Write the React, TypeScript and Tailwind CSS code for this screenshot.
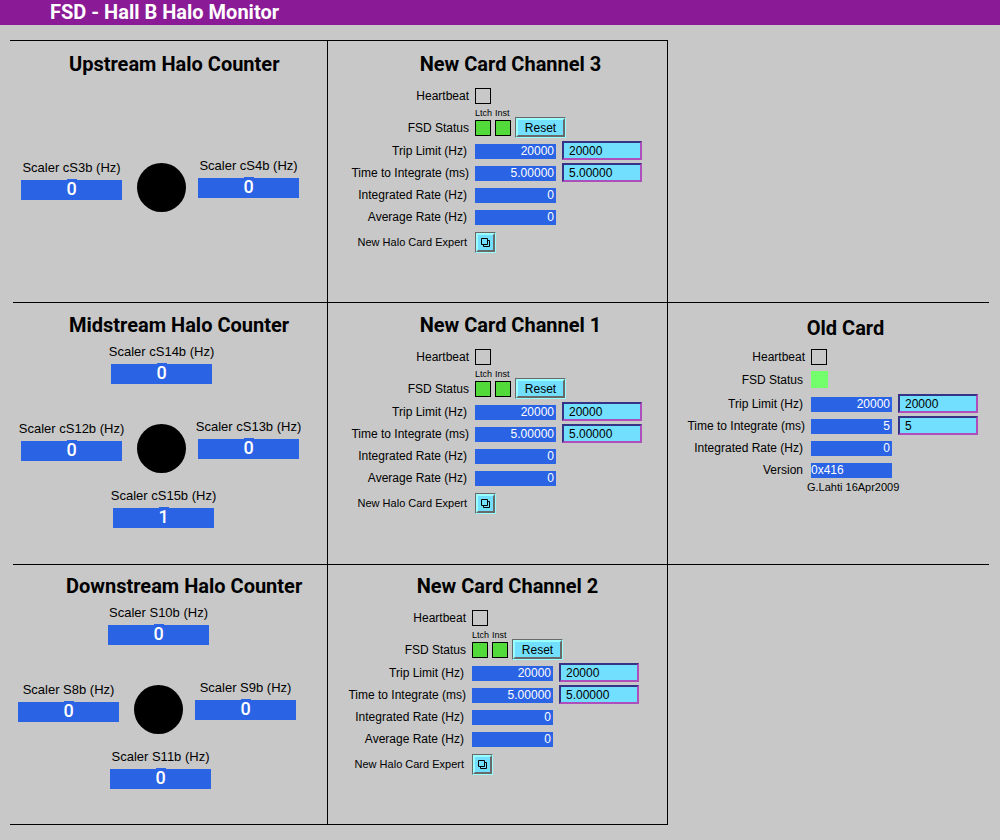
import { useId } from "react";

const BEVEL_OUTER =
  "border border-t-[#696969] border-l-[#696969] border-r-[#99ffff] border-b-[#99ffff]";
const BEVEL_INNER =
  "border-2 border-t-[#99ffff] border-l-[#99ffff] border-r-[#696969] border-b-[#696969] bg-[#73dfff]";

type ScalerData = { label: string; value: string };

function Scaler({ label, value }: ScalerData) {
  const id = useId();
  return (
    <div className="flex w-[101px] shrink-0 flex-col gap-1.5">
      <label
        htmlFor={id}
        className="flex justify-center text-[13px] leading-[13px] whitespace-nowrap"
      >
        {label}
      </label>
      <output id={id} className="flex h-5 justify-center bg-[#2a63e4]">
        <span className="-mt-px flex h-[21px] w-2.5 justify-center bg-[#2a63e4] font-[Roboto] text-lg leading-5 font-medium text-white">
          {value}
        </span>
      </output>
    </div>
  );
}

type CounterProps = {
  title: string;
  top?: ScalerData;
  left: ScalerData;
  right: ScalerData;
  bottom?: ScalerData;
  className: string;
};

function HaloCounter({ title, top, left, right, bottom, className }: CounterProps) {
  return (
    <section className={className}>
      <h2 className="pl-12 font-[Roboto] text-xl leading-6 font-bold whitespace-nowrap">{title}</h2>
      <div className="mt-2 min-h-[39px] pl-[90px]">{top && <Scaler {...top} />}</div>
      <div className="mt-9 flex items-start">
        <div className="pt-0.5">
          <Scaler {...left} />
        </div>
        <div className="mt-1 mr-3 ml-[15px] size-[49px] shrink-0 rounded-full bg-black" />
        <Scaler {...right} />
      </div>
      <div className="mt-4 pl-[92px]">{bottom && <Scaler {...bottom} />}</div>
    </section>
  );
}

type ReadingProps = {
  label: string;
  value: string;
  setpoint?: string;
  labelWidth: string;
  align?: string;
};

function Reading({ label, value, setpoint, labelWidth, align = "text-right pr-0.5" }: ReadingProps) {
  const id = useId();
  return (
    <div className="flex h-[19px] items-end gap-1.5 text-xs leading-[15px]">
      <label htmlFor={id} className={`${labelWidth} mb-px shrink-0 text-right whitespace-nowrap`}>
        {label}
      </label>
      <output id={id} className={`${align} mb-px h-[15px] w-[81px] shrink-0 bg-[#2a63e4] text-white`}>
        {value}
      </output>
      {setpoint && (
        <input
          type="text"
          aria-label={`${label} setpoint`}
          defaultValue={setpoint}
          className="h-[19px] w-20 shrink-0 border-2 border-t-[#343386] border-r-[#ae4ebc] border-b-[#ae4ebc] border-l-[#343386] bg-[#73dfff] px-[5px] outline-none"
        />
      )}
    </div>
  );
}

function Lamp({ color = "" }: { color?: string }) {
  return <span className={`${color} size-4 shrink-0 border border-black`} />;
}

function RelatedDisplayIcon() {
  return (
    <svg width="9" height="9" viewBox="0 0 9 9" fill="none" stroke="black">
      <path d="M0.5 0.5H6.5V6.5H0.5Z" />
      <path d="M6.5 2.5H8.5V8.5H2.5V6.5" />
    </svg>
  );
}

type ChannelProps = { channel: number; className: string };

function ChannelCard({ channel, className }: ChannelProps) {
  return (
    <section className={className}>
      <h2 className="w-[309px] pl-[46px] text-center font-[Roboto] text-xl leading-6 font-bold whitespace-nowrap">
        New Card Channel {channel}
      </h2>
      <div className="mt-3 flex h-4 items-center gap-1.5 text-xs">
        <span className="w-[136px] text-right">Heartbeat</span>
        <Lamp />
      </div>
      <div className="flex h-[13px] items-end pl-[142px] text-[9px] leading-[8px]">
        <span className="w-5">Ltch</span>
        <span className="w-5">Inst</span>
      </div>
      <div className="flex h-[21px] items-center text-xs">
        <span className="mr-1.5 w-[136px] text-right">FSD Status</span>
        <span className="flex gap-1">
          <Lamp color="bg-[#52da3b]" />
          <Lamp color="bg-[#52da3b]" />
        </span>
        <button type="button" className={`${BEVEL_OUTER} ml-1 h-[21px] w-[51px]`}>
          <span className={`${BEVEL_INNER} flex h-full items-center justify-center`}>Reset</span>
        </button>
      </div>
      <div className="mt-[3px] flex flex-col gap-[3px]">
        <Reading label="Trip Limit (Hz)" value="20000" setpoint="20000" labelWidth="w-[136px] pr-0.5" />
        <Reading label="Time to Integrate (ms)" value="5.00000" setpoint="5.00000" labelWidth="w-[136px]" />
        <Reading label="Integrated Rate (Hz)" value="0" labelWidth="w-[136px] pr-0.5" />
        <Reading label="Average Rate (Hz)" value="0" labelWidth="w-[136px] pr-0.5" />
      </div>
      <div className="mt-1.5 flex h-[21px] items-center gap-1.5 text-[11px]">
        <span className="w-[136px] pr-0.5 text-right">New Halo Card Expert</span>
        <button
          type="button"
          aria-label={`Open expert display for channel ${channel}`}
          className={`${BEVEL_OUTER} size-[21px]`}
        >
          <span className={`${BEVEL_INNER} flex h-full items-center justify-center`}>
            <RelatedDisplayIcon />
          </span>
        </button>
      </div>
    </section>
  );
}

function OldCard() {
  return (
    <section className="pt-[13px] pl-[5px]">
      <h2 className="w-[309px] pl-9 text-center font-[Roboto] text-xl leading-6 font-bold">
        Old Card
      </h2>
      <div className="mt-[9px] flex h-4 items-center gap-1.5 text-xs">
        <span className="w-[132px] text-right">Heartbeat</span>
        <Lamp />
      </div>
      <div className="mt-1.5 flex h-[17px] items-center gap-1.5 text-xs">
        <span className="w-[132px] pr-0.5 text-right">FSD Status</span>
        <span className="size-[17px] bg-[#73ff6b]" />
      </div>
      <div className="mt-1.5 flex flex-col gap-[3px]">
        <Reading label="Trip Limit (Hz)" value="20000" setpoint="20000" labelWidth="w-[132px] pr-0.5" />
        <Reading label="Time to Integrate (ms)" value="5" setpoint="5" labelWidth="w-[132px]" />
        <Reading label="Integrated Rate (Hz)" value="0" labelWidth="w-[132px] pr-0.5" />
        <Reading label="Version" value="0x416" labelWidth="w-[132px] pr-0.5" align="text-left" />
      </div>
      <p className="pl-[134px] text-[11px] leading-4">G.Lahti 16Apr2009</p>
    </section>
  );
}

function Rule({ className = "" }: { className?: string }) {
  return <hr className={`${className} h-px border-0 bg-black`} />;
}

export default function App() {
  return (
    <div className="min-h-screen bg-[#c8c8c8] font-['Liberation_Sans',sans-serif] text-black">
      <header className="h-[25px] bg-[#8b1a96] pl-[50px]">
        <h1 className="font-[Roboto] text-xl leading-[25px] font-bold text-white">
          FSD - Hall B Halo Monitor
        </h1>
      </header>
      <main className="mt-[15px] grid grid-cols-[328fr_340fr_332fr]">
        <div className="min-h-[262px] border-r border-black">
          <Rule className="ml-2.5" />
          <HaloCounter
            title="Upstream Halo Counter"
            left={{ label: "Scaler cS3b (Hz)", value: "0" }}
            right={{ label: "Scaler cS4b (Hz)", value: "0" }}
            className="pt-[11px] pl-[21px]"
          />
        </div>
        <div className="border-r border-black">
          <Rule />
          <ChannelCard channel={3} className="pt-[11px] pl-[5px]" />
        </div>
        <div />

        <div className="min-h-[262px] border-r border-black">
          <Rule className="ml-[13px]" />
          <HaloCounter
            title="Midstream Halo Counter"
            top={{ label: "Scaler cS14b (Hz)", value: "0" }}
            left={{ label: "Scaler cS12b (Hz)", value: "0" }}
            right={{ label: "Scaler cS13b (Hz)", value: "0" }}
            bottom={{ label: "Scaler cS15b (Hz)", value: "1" }}
            className="pt-2.5 pl-[21px]"
          />
        </div>
        <div className="border-r border-black">
          <Rule />
          <ChannelCard channel={1} className="pt-2.5 pl-[5px]" />
        </div>
        <div>
          <Rule className="mr-[11px]" />
          <OldCard />
        </div>

        <div className="min-h-[260px] border-r border-black">
          <Rule className="ml-[13px]" />
          <HaloCounter
            title="Downstream Halo Counter"
            top={{ label: "Scaler S10b (Hz)", value: "0" }}
            left={{ label: "Scaler S8b (Hz)", value: "0" }}
            right={{ label: "Scaler S9b (Hz)", value: "0" }}
            bottom={{ label: "Scaler S11b (Hz)", value: "0" }}
            className="pt-[9px] pl-[18px]"
          />
        </div>
        <div className="border-r border-black">
          <Rule />
          <ChannelCard channel={2} className="pt-[9px] pl-0.5" />
        </div>
        <div>
          <Rule className="mr-[11px]" />
        </div>

        <Rule className="ml-2.5" />
        <Rule />
      </main>
    </div>
  );
}
